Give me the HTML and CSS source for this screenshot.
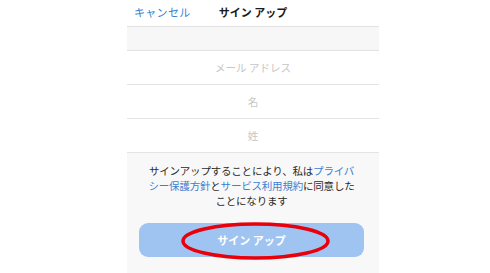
FILE: index.html
```html
<!DOCTYPE html>
<html lang="ja">
<head>
<meta charset="utf-8">
<link rel="stylesheet" href="styles.css">
</head>
<body>
<div class="panel">
  <header class="top">
    <span class="cancel">キャンセル</span>
    <span class="title">サイン アップ</span>
  </header>
  <div class="band"></div>
  <div class="row">メール アドレス</div>
  <div class="row">名</div>
  <div class="row">姓</div>
  <div class="footer">
    <p class="terms">サインアップすることにより、私は<span class="link">プライバ<br>シー保護方針</span>と<span class="link">サービス利用規約</span>に同意した<br>ことになります</p>
    <div class="btn">サイン アップ
      <svg class="mark" width="151" height="40" viewBox="0 0 151 40"><ellipse cx="75.5" cy="20" rx="72.5" ry="17" fill="none" stroke="#e8000b" stroke-width="3.5"/></svg>
    </div>
  </div>
</div>
</body>
</html>
```
FILE: styles.css
```css
html, body {
  margin: 0;
  padding: 0;
  background: #ffffff;
  height: 100%;
  overflow: hidden;
}
body {
  font-family: "Noto Sans CJK JP", "Noto Sans", sans-serif;
}
.panel {
  margin-left: 127px;
  width: 252px;
  height: 273px;
  display: flex;
  flex-direction: column;
  background: #f8f8f8;
}
.top {
  position: relative;
  height: 26px;
  background: #ffffff;
  border-bottom: 1px solid #e2e2e2;
  display: flex;
  align-items: center;
  justify-content: center;
}
.cancel {
  position: absolute;
  left: 7px;
  top: 4px;
  font-size: 11px;
  line-height: 16px;
  color: #3a80d4;
  letter-spacing: 0.3px;
}
.title {
  font-size: 11px;
  font-weight: bold;
  color: #1a1a1a;
  line-height: 16px;
  margin-top: -2px;
}
.band {
  height: 23px;
  background: #f7f7f7;
  border-bottom: 1px solid #e2e2e2;
}
.row {
  height: 33px;
  background: #ffffff;
  border-bottom: 1px solid #e4e4e4;
  display: flex;
  align-items: center;
  justify-content: center;
  font-size: 10.5px;
  color: #c6c6c6;
}
.footer {
  flex: 1;
  background: #f8f8f8;
  display: flex;
  flex-direction: column;
  padding: 10px 15px 0 12px;
}
.terms {
  margin: 0;
  text-align: center;
  font-size: 10.5px;
  line-height: 15px;
  letter-spacing: -0.2px;
  color: #2a2a2a;
}
.link {
  color: #3a80d4;
}
.btn {
  position: relative;
  margin-top: 15px;
  height: 34px;
  border-radius: 9px;
  background: #9fc4f2;
  color: #ffffff;
  font-size: 11px;
  font-weight: bold;
  display: flex;
  align-items: center;
  justify-content: center;
}
.mark {
  position: absolute;
  left: 41px;
  top: -2px;
}
```
